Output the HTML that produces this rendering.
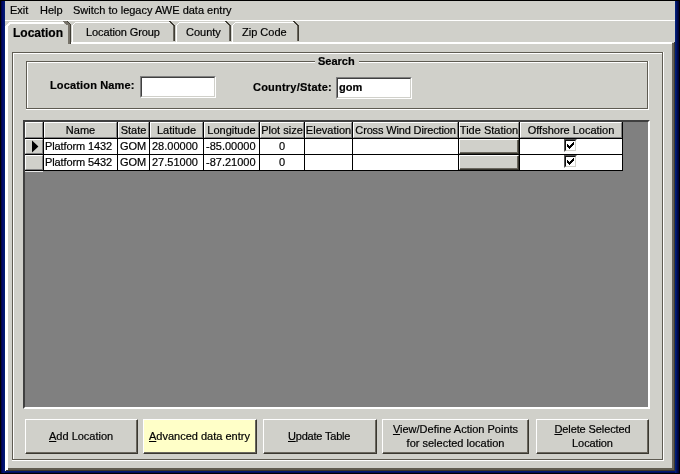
<!DOCTYPE html>
<html><head><meta charset="utf-8">
<style>
*{margin:0;padding:0;box-sizing:border-box}
html,body{width:680px;height:474px;overflow:hidden}
body{position:relative;background:#000a68;font-family:"Liberation Sans",sans-serif;font-size:11px;color:#000}
.a{position:absolute}
.t{position:absolute;white-space:nowrap;line-height:13px;font-size:11px;-webkit-text-stroke:0.2px #000;will-change:transform}
.b{font-weight:bold}
svg{position:absolute;shape-rendering:crispEdges}
</style></head><body>
<div class="a" style="left:0px;top:0px;width:680px;height:1px;background:#000;"></div>
<div class="a" style="left:0px;top:0px;width:1px;height:474px;background:#000;"></div>
<div class="a" style="left:679px;top:0px;width:1px;height:474px;background:#000;"></div>
<div class="a" style="left:5px;top:1px;width:670px;height:470px;background:#d0d0ca;"></div>
<div class="t " style="left:10px;top:4px;">Exit</div>
<div class="t " style="left:40px;top:4px;">Help</div>
<div class="t " style="left:73px;top:4px;">Switch to legacy AWE data entry</div>
<div class="a" style="left:5px;top:20px;width:670px;height:1px;background:#fff;"></div>
<div class="a" style="left:70px;top:42px;width:602px;height:2px;background:#fff;"></div>
<div class="a" style="left:5px;top:42px;width:3px;height:429px;background:#fff;"></div>
<div class="a" style="left:672px;top:43px;width:2px;height:428px;background:#66625a;"></div>
<div class="a" style="left:674px;top:42px;width:1px;height:429px;background:#3c3830;"></div>
<div class="a" style="left:8px;top:468px;width:666px;height:2px;background:#5f5b4f;"></div>
<div class="a" style="left:5px;top:470px;width:670px;height:1px;background:#3a3528;"></div>
<div class="a" style="left:5px;top:468px;width:3px;height:1px;background:#fff;"></div>
<div class="a" style="left:5px;top:469px;width:2px;height:1px;background:#fff;"></div>
<div class="a" style="left:5px;top:470px;width:1px;height:1px;background:#fff;"></div>
<div class="a" style="left:0px;top:473px;width:680px;height:1px;background:#000;"></div>
<div class="a" style="left:1px;top:1px;width:1px;height:472px;background:#000448;"></div>
<div class="a" style="left:2px;top:1px;width:1px;height:472px;background:#00086a;"></div>
<div class="a" style="left:3px;top:1px;width:1px;height:472px;background:#00126e;"></div>
<div class="a" style="left:4px;top:1px;width:1px;height:472px;background:#001a72;"></div>
<div class="a" style="left:675px;top:1px;width:1px;height:472px;background:#00207a;"></div>
<div class="a" style="left:676px;top:1px;width:1px;height:472px;background:#001468;"></div>
<div class="a" style="left:677px;top:1px;width:1px;height:472px;background:#000a50;"></div>
<div class="a" style="left:678px;top:1px;width:1px;height:472px;background:#000438;"></div>
<div class="a" style="left:5px;top:471px;width:670px;height:1px;background:#001870;"></div>
<div class="a" style="left:5px;top:472px;width:670px;height:1px;background:#000c58;"></div>
<svg style="left:0;top:0" width="680" height="50"><rect x="5" y="26" width="3" height="18" fill="#fff"/><rect x="6" y="25" width="3" height="1" fill="#fff"/><rect x="7" y="24" width="3" height="1" fill="#fff"/><rect x="8" y="23" width="56" height="1" fill="#fff"/><rect x="9" y="22" width="55" height="1" fill="#fff"/><rect x="63" y="21" width="4" height="1" fill="#77736a"/><rect x="64" y="22" width="4" height="1" fill="#77736a"/><rect x="65" y="23" width="4" height="1" fill="#77736a"/><rect x="66" y="24" width="4" height="1" fill="#77736a"/><rect x="68" y="25" width="2" height="19" fill="#77736a"/><rect x="70" y="25" width="1" height="19" fill="#3f3c34"/><rect x="67" y="21" width="1" height="1" fill="#3f3c34"/><rect x="68" y="22" width="1" height="1" fill="#3f3c34"/><rect x="69" y="23" width="1" height="1" fill="#3f3c34"/><rect x="70" y="24" width="1" height="1" fill="#3f3c34"/><rect x="72" y="25" width="1" height="17" fill="#fff"/><rect x="73" y="24" width="1" height="1" fill="#fff"/><rect x="74" y="23" width="1" height="1" fill="#fff"/><rect x="75" y="22" width="95" height="1" fill="#fff"/><rect x="169" y="21" width="2" height="1" fill="#3f3c34"/><rect x="170" y="22" width="2" height="1" fill="#3f3c34"/><rect x="171" y="23" width="2" height="1" fill="#3f3c34"/><rect x="172" y="24" width="2" height="1" fill="#3f3c34"/><rect x="173" y="25" width="2" height="1" fill="#3f3c34"/><rect x="173" y="26" width="1" height="15" fill="#6a675e"/><rect x="174" y="26" width="1" height="15" fill="#3f3c34"/><rect x="176" y="25" width="1" height="17" fill="#fff"/><rect x="177" y="24" width="1" height="1" fill="#fff"/><rect x="178" y="23" width="1" height="1" fill="#fff"/><rect x="179" y="22" width="47" height="1" fill="#fff"/><rect x="225" y="21" width="2" height="1" fill="#3f3c34"/><rect x="226" y="22" width="2" height="1" fill="#3f3c34"/><rect x="227" y="23" width="2" height="1" fill="#3f3c34"/><rect x="228" y="24" width="2" height="1" fill="#3f3c34"/><rect x="229" y="25" width="2" height="1" fill="#3f3c34"/><rect x="229" y="26" width="1" height="15" fill="#6a675e"/><rect x="230" y="26" width="1" height="15" fill="#3f3c34"/><rect x="232" y="25" width="1" height="17" fill="#fff"/><rect x="233" y="24" width="1" height="1" fill="#fff"/><rect x="234" y="23" width="1" height="1" fill="#fff"/><rect x="235" y="22" width="59" height="1" fill="#fff"/><rect x="293" y="21" width="2" height="1" fill="#3f3c34"/><rect x="294" y="22" width="2" height="1" fill="#3f3c34"/><rect x="295" y="23" width="2" height="1" fill="#3f3c34"/><rect x="296" y="24" width="2" height="1" fill="#3f3c34"/><rect x="297" y="25" width="2" height="1" fill="#3f3c34"/><rect x="297" y="26" width="1" height="15" fill="#6a675e"/><rect x="298" y="26" width="1" height="15" fill="#3f3c34"/></svg>
<div class="t b" style="left:13px;top:26px;font-size:12px;line-height:14px">Location</div>
<div class="t " style="left:86px;top:26px;letter-spacing:-0.1px">Location Group</div>
<div class="t " style="left:186px;top:26px;">County</div>
<div class="t " style="left:242px;top:26px;">Zip Code</div>
<div class="a" style="left:12px;top:52px;width:651px;height:1px;background:#5e5b52;"></div>
<div class="a" style="left:12px;top:52px;width:1px;height:408px;background:#5e5b52;"></div>
<div class="a" style="left:662px;top:52px;width:1px;height:408px;background:#5e5b52;"></div>
<div class="a" style="left:12px;top:459px;width:651px;height:1px;background:#5e5b52;"></div>
<div class="a" style="left:13px;top:53px;width:649px;height:1px;background:#fff;"></div>
<div class="a" style="left:13px;top:53px;width:1px;height:406px;background:#fff;"></div>
<div class="a" style="left:663px;top:52px;width:1px;height:409px;background:#fff;"></div>
<div class="a" style="left:12px;top:460px;width:652px;height:1px;background:#fff;"></div>
<div class="a" style="left:26px;top:61px;width:622px;height:1px;background:#5e5b52;"></div>
<div class="a" style="left:26px;top:61px;width:1px;height:48px;background:#5e5b52;"></div>
<div class="a" style="left:647px;top:61px;width:1px;height:48px;background:#5e5b52;"></div>
<div class="a" style="left:26px;top:108px;width:622px;height:1px;background:#5e5b52;"></div>
<div class="a" style="left:27px;top:62px;width:620px;height:1px;background:#fff;"></div>
<div class="a" style="left:27px;top:62px;width:1px;height:46px;background:#fff;"></div>
<div class="a" style="left:648px;top:61px;width:1px;height:49px;background:#fff;"></div>
<div class="a" style="left:26px;top:109px;width:623px;height:1px;background:#fff;"></div>
<div class="a" style="left:315px;top:57px;width:44px;height:8px;background:#d0d0ca;"></div>
<div class="t b" style="left:318px;top:55px;">Search</div>
<div class="t b" style="left:50px;top:79px;letter-spacing:0.15px">Location Name:</div>
<div class="a" style="left:140px;top:76px;width:76px;height:22px;background:#fff;border-top:1px solid #808080;border-left:1px solid #808080;border-right:1px solid #fff;border-bottom:1px solid #fff"></div>
<div class="a" style="left:141px;top:77px;width:74px;height:20px;background:transparent;border-top:1px solid #404040;border-left:1px solid #404040;border-right:1px solid #d0d0ca;border-bottom:1px solid #d0d0ca"></div>
<div class="t b" style="left:253px;top:81px;letter-spacing:0.22px">Country/State:</div>
<div class="a" style="left:336px;top:77px;width:76px;height:22px;background:#fff;border-top:1px solid #808080;border-left:1px solid #808080;border-right:1px solid #fff;border-bottom:1px solid #fff"></div>
<div class="a" style="left:337px;top:78px;width:74px;height:20px;background:transparent;border-top:1px solid #404040;border-left:1px solid #404040;border-right:1px solid #d0d0ca;border-bottom:1px solid #d0d0ca"></div>
<div class="t b" style="left:339px;top:81px;">gom</div>
<div class="a" style="left:23px;top:120px;width:627px;height:289px;background:#808080;border-top:2px solid #404040;border-left:2px solid #404040;border-right:2px solid #fff;border-bottom:2px solid #fff"></div>
<div class="a" style="left:25px;top:122px;width:18px;height:16px;background:#d0d0ca;border-top:1px solid #fff;border-left:1px solid #fff;border-right:1px solid #808080;border-bottom:1px solid #808080"></div>
<div class="a" style="left:25px;top:139px;width:18px;height:15px;background:#d0d0ca;border-top:1px solid #fff;border-left:1px solid #fff;border-right:1px solid #808080;border-bottom:1px solid #808080"></div>
<div class="a" style="left:25px;top:155px;width:18px;height:15px;background:#d0d0ca;border-top:1px solid #fff;border-left:1px solid #fff;border-right:1px solid #808080;border-bottom:1px solid #808080"></div>
<div class="a" style="left:25px;top:138px;width:598px;height:1px;background:#000;"></div>
<div class="a" style="left:25px;top:154px;width:598px;height:1px;background:#000;"></div>
<div class="a" style="left:25px;top:170px;width:598px;height:1px;background:#000;"></div>
<div class="a" style="left:43px;top:122px;width:1px;height:49px;background:#000;"></div>
<div class="a" style="left:25px;top:171px;width:18px;height:1px;background:#e8e8e8;"></div>
<div class="a" style="left:44px;top:122px;width:73px;height:16px;background:#d0d0ca;border-top:1px solid #fff;border-left:1px solid #fff;border-right:1px solid #808080;border-bottom:1px solid #808080"></div>
<div class="t " style="left:44px;top:124px;width:73px;text-align:center;">Name</div>
<div class="a" style="left:117px;top:122px;width:1px;height:49px;background:#000;"></div>
<div class="a" style="left:44px;top:139px;width:73px;height:15px;background:#fff;"></div>
<div class="t " style="left:45px;top:140px;letter-spacing:-0.12px">Platform 1432</div>
<div class="a" style="left:44px;top:155px;width:73px;height:15px;background:#fff;"></div>
<div class="t " style="left:45px;top:156px;letter-spacing:-0.12px">Platform 5432</div>
<div class="a" style="left:118px;top:122px;width:31px;height:16px;background:#d0d0ca;border-top:1px solid #fff;border-left:1px solid #fff;border-right:1px solid #808080;border-bottom:1px solid #808080"></div>
<div class="t " style="left:118px;top:124px;width:31px;text-align:center;">State</div>
<div class="a" style="left:149px;top:122px;width:1px;height:49px;background:#000;"></div>
<div class="a" style="left:118px;top:139px;width:31px;height:15px;background:#fff;"></div>
<div class="t " style="left:120px;top:140px;">GOM</div>
<div class="a" style="left:118px;top:155px;width:31px;height:15px;background:#fff;"></div>
<div class="t " style="left:120px;top:156px;">GOM</div>
<div class="a" style="left:150px;top:122px;width:53px;height:16px;background:#d0d0ca;border-top:1px solid #fff;border-left:1px solid #fff;border-right:1px solid #808080;border-bottom:1px solid #808080"></div>
<div class="t " style="left:150px;top:124px;width:53px;text-align:center;">Latitude</div>
<div class="a" style="left:203px;top:122px;width:1px;height:49px;background:#000;"></div>
<div class="a" style="left:150px;top:139px;width:53px;height:15px;background:#fff;"></div>
<div class="t " style="left:152px;top:140px;">28.00000</div>
<div class="a" style="left:150px;top:155px;width:53px;height:15px;background:#fff;"></div>
<div class="t " style="left:152px;top:156px;">27.51000</div>
<div class="a" style="left:204px;top:122px;width:55px;height:16px;background:#d0d0ca;border-top:1px solid #fff;border-left:1px solid #fff;border-right:1px solid #808080;border-bottom:1px solid #808080"></div>
<div class="t " style="left:204px;top:124px;width:55px;text-align:center;">Longitude</div>
<div class="a" style="left:259px;top:122px;width:1px;height:49px;background:#000;"></div>
<div class="a" style="left:204px;top:139px;width:55px;height:15px;background:#fff;"></div>
<div class="t " style="left:206px;top:140px;">-85.00000</div>
<div class="a" style="left:204px;top:155px;width:55px;height:15px;background:#fff;"></div>
<div class="t " style="left:206px;top:156px;">-87.21000</div>
<div class="a" style="left:260px;top:122px;width:44px;height:16px;background:#d0d0ca;border-top:1px solid #fff;border-left:1px solid #fff;border-right:1px solid #808080;border-bottom:1px solid #808080"></div>
<div class="t " style="left:260px;top:124px;width:44px;text-align:center;">Plot size</div>
<div class="a" style="left:304px;top:122px;width:1px;height:49px;background:#000;"></div>
<div class="a" style="left:260px;top:139px;width:44px;height:15px;background:#fff;"></div>
<div class="t " style="left:260px;top:140px;width:44px;text-align:center">0</div>
<div class="a" style="left:260px;top:155px;width:44px;height:15px;background:#fff;"></div>
<div class="t " style="left:260px;top:156px;width:44px;text-align:center">0</div>
<div class="a" style="left:305px;top:122px;width:47px;height:16px;background:#d0d0ca;border-top:1px solid #fff;border-left:1px solid #fff;border-right:1px solid #808080;border-bottom:1px solid #808080"></div>
<div class="t " style="left:305px;top:124px;width:47px;text-align:center;">Elevation</div>
<div class="a" style="left:352px;top:122px;width:1px;height:49px;background:#000;"></div>
<div class="a" style="left:305px;top:139px;width:47px;height:15px;background:#fff;"></div>
<div class="a" style="left:305px;top:155px;width:47px;height:15px;background:#fff;"></div>
<div class="a" style="left:353px;top:122px;width:105px;height:16px;background:#d0d0ca;border-top:1px solid #fff;border-left:1px solid #fff;border-right:1px solid #808080;border-bottom:1px solid #808080"></div>
<div class="t " style="left:353px;top:124px;width:105px;text-align:center;letter-spacing:-0.15px;">Cross Wind Direction</div>
<div class="a" style="left:458px;top:122px;width:1px;height:49px;background:#000;"></div>
<div class="a" style="left:353px;top:139px;width:105px;height:15px;background:#fff;"></div>
<div class="a" style="left:353px;top:155px;width:105px;height:15px;background:#fff;"></div>
<div class="a" style="left:459px;top:122px;width:60px;height:16px;background:#d0d0ca;border-top:1px solid #fff;border-left:1px solid #fff;border-right:1px solid #808080;border-bottom:1px solid #808080"></div>
<div class="t " style="left:459px;top:124px;width:60px;text-align:center;">Tide Station</div>
<div class="a" style="left:519px;top:122px;width:1px;height:49px;background:#000;"></div>
<div class="a" style="left:459px;top:139px;width:60px;height:15px;background:#d0d0ca;border-top:1px solid #fff;border-left:1px solid #fff;border-right:1px solid #3a3830;border-bottom:1px solid #3a3830;box-shadow:inset -1px -1px 0 #6a675e"></div>
<div class="a" style="left:459px;top:155px;width:60px;height:15px;background:#d0d0ca;border-top:1px solid #fff;border-left:1px solid #fff;border-right:1px solid #3a3830;border-bottom:1px solid #3a3830;box-shadow:inset -1px -1px 0 #6a675e"></div>
<div class="a" style="left:520px;top:122px;width:102px;height:16px;background:#d0d0ca;border-top:1px solid #fff;border-left:1px solid #fff;border-right:1px solid #808080;border-bottom:1px solid #808080"></div>
<div class="t " style="left:520px;top:124px;width:102px;text-align:center;">Offshore Location</div>
<div class="a" style="left:622px;top:122px;width:1px;height:49px;background:#000;"></div>
<div class="a" style="left:520px;top:139px;width:102px;height:15px;background:#fff;"></div>
<div class="a" style="left:564px;top:139px;width:13px;height:13px;background:#fff;border-top:1px solid #555;border-left:1px solid #555;border-right:1px solid #fff;border-bottom:1px solid #fff"></div>
<div class="a" style="left:565px;top:140px;width:11px;height:11px;background:transparent;border-top:1px solid #111;border-left:1px solid #111;border-right:1px solid #d0d0ca;border-bottom:1px solid #d0d0ca"></div>
<svg style="left:564px;top:139px" width="13" height="13"><rect x="9" y="3" width="1" height="1"/><rect x="8" y="4" width="1" height="1"/><rect x="9" y="4" width="1" height="1"/><rect x="3" y="5" width="1" height="1"/><rect x="7" y="5" width="1" height="1"/><rect x="8" y="5" width="1" height="1"/><rect x="9" y="5" width="1" height="1"/><rect x="3" y="6" width="1" height="1"/><rect x="4" y="6" width="1" height="1"/><rect x="6" y="6" width="1" height="1"/><rect x="7" y="6" width="1" height="1"/><rect x="8" y="6" width="1" height="1"/><rect x="3" y="7" width="1" height="1"/><rect x="4" y="7" width="1" height="1"/><rect x="5" y="7" width="1" height="1"/><rect x="6" y="7" width="1" height="1"/><rect x="7" y="7" width="1" height="1"/><rect x="4" y="8" width="1" height="1"/><rect x="5" y="8" width="1" height="1"/><rect x="6" y="8" width="1" height="1"/><rect x="5" y="9" width="1" height="1"/></svg>
<div class="a" style="left:520px;top:155px;width:102px;height:15px;background:#fff;"></div>
<div class="a" style="left:564px;top:155px;width:13px;height:13px;background:#fff;border-top:1px solid #555;border-left:1px solid #555;border-right:1px solid #fff;border-bottom:1px solid #fff"></div>
<div class="a" style="left:565px;top:156px;width:11px;height:11px;background:transparent;border-top:1px solid #111;border-left:1px solid #111;border-right:1px solid #d0d0ca;border-bottom:1px solid #d0d0ca"></div>
<svg style="left:564px;top:155px" width="13" height="13"><rect x="9" y="3" width="1" height="1"/><rect x="8" y="4" width="1" height="1"/><rect x="9" y="4" width="1" height="1"/><rect x="3" y="5" width="1" height="1"/><rect x="7" y="5" width="1" height="1"/><rect x="8" y="5" width="1" height="1"/><rect x="9" y="5" width="1" height="1"/><rect x="3" y="6" width="1" height="1"/><rect x="4" y="6" width="1" height="1"/><rect x="6" y="6" width="1" height="1"/><rect x="7" y="6" width="1" height="1"/><rect x="8" y="6" width="1" height="1"/><rect x="3" y="7" width="1" height="1"/><rect x="4" y="7" width="1" height="1"/><rect x="5" y="7" width="1" height="1"/><rect x="6" y="7" width="1" height="1"/><rect x="7" y="7" width="1" height="1"/><rect x="4" y="8" width="1" height="1"/><rect x="5" y="8" width="1" height="1"/><rect x="6" y="8" width="1" height="1"/><rect x="5" y="9" width="1" height="1"/></svg>
<svg style="left:25px;top:139px;shape-rendering:auto" width="18" height="15"><path d="M7 1.6 L13.4 7.6 L7 13.6 Z" fill="#000"/></svg>
<div class="a" style="left:25px;top:419px;width:113px;height:35px;background:#d0d0ca;border-top:1px solid #fff;border-left:1px solid #fff;border-right:1px solid #3a3830;border-bottom:1px solid #3a3830;box-shadow:inset -1px -1px 0 #6a675e"></div>
<div class="t " style="left:49px;top:430px;"><u>A</u>dd Location</div>
<div class="a" style="left:143px;top:419px;width:114px;height:35px;background:#ffffc8;border-top:1px solid #fff;border-left:1px solid #fff;border-right:1px solid #3a3830;border-bottom:1px solid #3a3830;box-shadow:inset -1px -1px 0 #6a675e"></div>
<div class="t " style="left:149px;top:430px;"><u>A</u>dvanced data entry</div>
<div class="a" style="left:263px;top:419px;width:114px;height:35px;background:#d0d0ca;border-top:1px solid #fff;border-left:1px solid #fff;border-right:1px solid #3a3830;border-bottom:1px solid #3a3830;box-shadow:inset -1px -1px 0 #6a675e"></div>
<div class="t " style="left:288px;top:430px;letter-spacing:-0.2px"><u>U</u>pdate Table</div>
<div class="a" style="left:382px;top:419px;width:147px;height:35px;background:#d0d0ca;border-top:1px solid #fff;border-left:1px solid #fff;border-right:1px solid #3a3830;border-bottom:1px solid #3a3830;box-shadow:inset -1px -1px 0 #6a675e"></div>
<div class="t " style="left:382px;top:422px;width:147px;text-align:center;line-height:14px"><u>V</u>iew/Define Action Points<br>for selected location</div>
<div class="a" style="left:536px;top:419px;width:113px;height:35px;background:#d0d0ca;border-top:1px solid #fff;border-left:1px solid #fff;border-right:1px solid #3a3830;border-bottom:1px solid #3a3830;box-shadow:inset -1px -1px 0 #6a675e"></div>
<div class="t " style="left:536px;top:422px;letter-spacing:-0.1px;width:113px;text-align:center;line-height:14px"><u>D</u>elete Selected<br>Location</div>
</body></html>
